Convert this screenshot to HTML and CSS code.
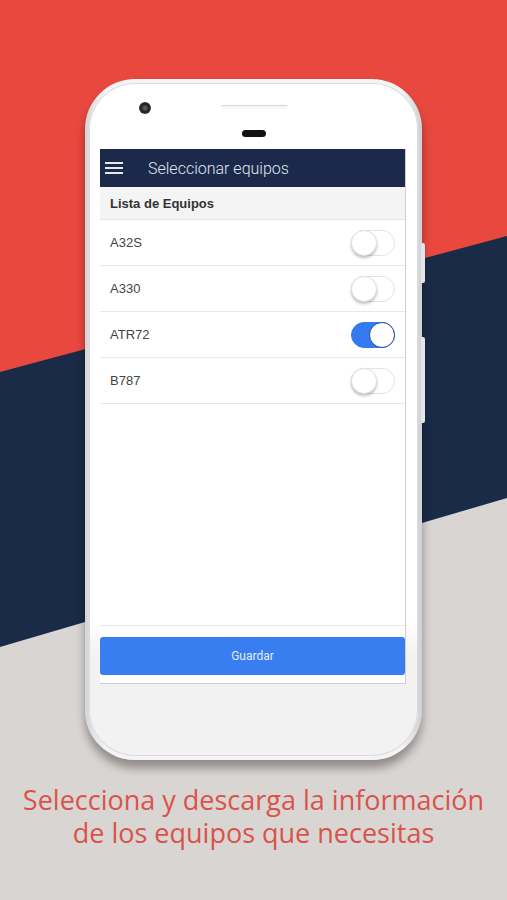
FILE: index.html
```html
<!DOCTYPE html>
<html lang="es">
<head>
    <meta charset="UTF-8">
    <meta name="viewport" content="width=device-width, initial-scale=1.0">
    <title>Seleccionar equipos</title>
    <link rel="stylesheet" href="styles.css">
</head>
<body>
    <svg class="backdrop" width="507" height="900" viewBox="0 0 507 900">
        <rect width="507" height="900" fill="#e9483f"/>
        <polygon points="0,372 507,236 507,900 0,900" fill="#1a2b47"/>
        <polygon points="0,647 507,498 507,900 0,900" fill="#d9d5d2"/>
    </svg>

    <main class="stage">
        <div class="phone">
            <span class="side-btn side-btn-short"></span>
            <span class="side-btn side-btn-long"></span>
            <div class="front">
                <div class="phone-top">
                    <span class="camera"></span>
                    <span class="speaker"></span>
                    <span class="sensor"></span>
                </div>

                <div class="screen">
                    <header class="appbar">
                        <svg class="menu" width="18" height="14" viewBox="0 0 18 14">
                            <rect x="0" y="1" width="18" height="2" fill="#e6e9f0"/>
                            <rect x="0" y="6" width="18" height="2" fill="#e6e9f0"/>
                            <rect x="0" y="11" width="18" height="2" fill="#e6e9f0"/>
                        </svg>
                        <h1>Seleccionar equipos</h1>
                    </header>

                    <div class="list-title">Lista de Equipos</div>
                    <ul class="list">
                        <li><span>A32S</span><span class="toggle"></span></li>
                        <li><span>A330</span><span class="toggle"></span></li>
                        <li><span>ATR72</span><span class="toggle on"></span></li>
                        <li><span>B787</span><span class="toggle"></span></li>
                    </ul>

                    <div class="actions">
                        <button class="save">Guardar</button>
                    </div>
                </div>
            </div>
        </div>

        <p class="caption">Selecciona y descarga la información<br>de los equipos que necesitas</p>
    </main>
</body>
</html>
```

FILE: styles.css
```css
body {
    margin: 0;
    width: 507px;
    height: 900px;
    overflow: hidden;
    position: relative;
    font-family: "Liberation Sans", Arial, sans-serif;
    background: #d9d5d2;
}

.backdrop {
    position: absolute;
    top: 0;
    left: 0;
}

.stage {
    position: relative;
    display: flex;
    flex-direction: column;
    align-items: center;
    padding-top: 79px;
}

.phone {
    position: relative;
    width: 329px;
    height: 673px;
    padding: 4px;
    border-radius: 50px;
    background: linear-gradient(90deg, #d4d5d8, #f4f4f6 6%, #f4f4f6 94%, #cfd0d3);
    box-shadow: 0 8px 10px rgba(0, 0, 0, 0.35);
}

.side-btn {
    position: absolute;
    right: -3px;
    width: 4px;
    background: #e4e5e8;
    border-radius: 0 2px 2px 0;
}

.side-btn-short {
    top: 164px;
    height: 40px;
}

.side-btn-long {
    top: 258px;
    height: 86px;
}

.front {
    height: 100%;
    border-radius: 46px;
    background: linear-gradient(#ffffff, #ffffff 80%, #f2f2f2 85%);
    box-shadow: inset 0 0 0 1px #dcdcdf;
    display: flex;
    flex-direction: column;
    align-items: center;
    overflow: hidden;
}

.phone-top {
    position: relative;
    width: 100%;
    height: 66px;
    flex-shrink: 0;
}

.camera {
    position: absolute;
    left: 50px;
    top: 19px;
    width: 12px;
    height: 12px;
    border-radius: 50%;
    background: radial-gradient(circle, #555 20%, #1c1c1c 45%, #3a3a3a 70%, #9a9a9a 100%);
}

.speaker {
    position: absolute;
    left: 132px;
    top: 22px;
    width: 67px;
    height: 3px;
    border-radius: 2px;
    border-top: 1px solid #d5d5d8;
    background: #f7f7f8;
}

.sensor {
    position: absolute;
    left: 153px;
    top: 47px;
    width: 24px;
    height: 7px;
    border-radius: 4px;
    background: #111;
}

.screen {
    width: 305px;
    height: 534px;
    margin-left: -1px;
    display: flex;
    flex-direction: column;
    background: #fff;
    border-right: 1px solid #cfcfd2;
    border-bottom: 1px solid #cfcfd2;
}

.appbar {
    height: 38px;
    flex-shrink: 0;
    background: #1b2a4a;
    display: flex;
    align-items: center;
    padding-left: 5px;
}

.appbar h1 {
    margin: 0 0 0 25px;
    font-family: Roboto, "Liberation Sans", sans-serif;
    font-weight: 300;
    font-size: 16px;
    color: #e1e5ee;
}

.list-title {
    height: 32px;
    flex-shrink: 0;
    display: flex;
    align-items: center;
    padding-left: 10px;
    background: #f4f4f4;
    border-bottom: 1px solid #e6e6e6;
    font-size: 13px;
    font-weight: bold;
    color: #333;
}

.list {
    list-style: none;
    margin: 0;
    padding: 0;
    flex: 1;
    border-bottom: 1px solid #e8e8e8;
}

.list li {
    height: 45px;
    display: flex;
    align-items: center;
    justify-content: space-between;
    padding: 0 10px;
    border-bottom: 1px solid #e8e8e8;
    font-size: 13px;
    color: #444;
}

.toggle {
    position: relative;
    width: 42px;
    height: 24px;
    border-radius: 13px;
    border: 1px solid #e3e3e3;
    background: #fff;
}

.toggle::after {
    content: "";
    position: absolute;
    top: -1px;
    left: -1px;
    width: 24px;
    height: 24px;
    border-radius: 50%;
    background: #fff;
    border: 1px solid #e0e0e0;
    box-shadow: 0 2px 3px rgba(0, 0, 0, 0.25);
}

.toggle.on {
    background: #3479ef;
    border-color: #3479ef;
}

.toggle.on::after {
    left: auto;
    right: -1px;
    border-color: #2a4f98;
    box-shadow: none;
}

.actions {
    padding: 11px 0 8px;
    flex-shrink: 0;
}

.save {
    display: block;
    width: 100%;
    height: 38px;
    border: 0;
    border-radius: 3px;
    background: #387ef1;
    color: #e3ecfd;
    font-family: Roboto, "Liberation Sans", sans-serif;
    font-size: 12px;
}

.caption {
    margin: 23px 0 0;
    text-align: center;
    font-family: "Open Sans", sans-serif;
    font-size: 27px;
    line-height: 33px;
    color: #d9534b;
}
```
